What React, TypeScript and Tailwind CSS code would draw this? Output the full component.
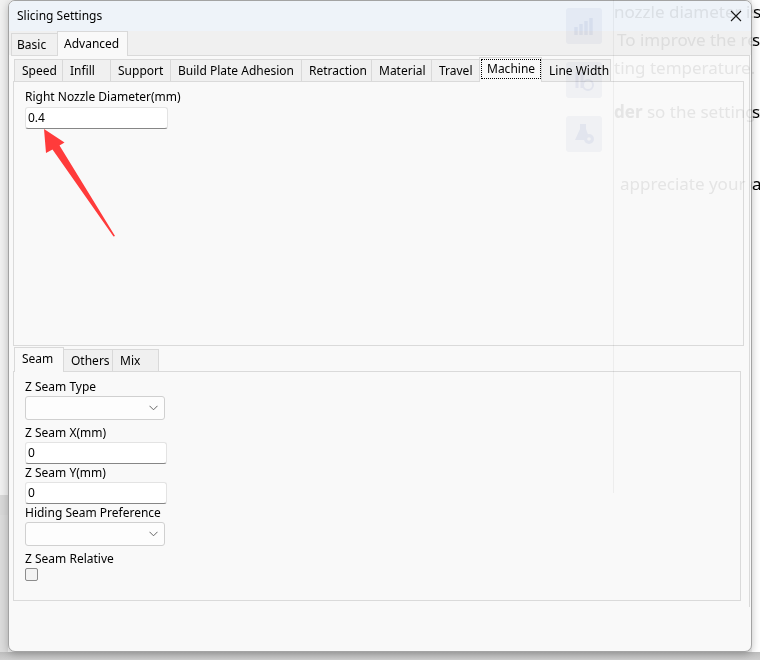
import React from 'react';

const innerTabs: [string, number][] = [
  ['Speed', 49],
  ['Infill', 48],
  ['Support', 60],
  ['Build Plate Adhesion', 131],
  ['Retraction', 70],
  ['Material', 60],
  ['Travel', 48],
  ['Machine', 63],
  ['Line Width', 69],
];

function Tab({ label, width, selected, focus, first }: { label: string; width: number; selected?: boolean; focus?: boolean; first?: boolean }) {
  if (selected) {
    return (
      <div
        style={{ width }}
        className={`relative z-10 -mb-px flex h-[25px] shrink-0 items-start border-x border-t border-[#d9d9d9] bg-[#f9f9f9] pl-[2px] pt-[2px] ${first ? '' : '-ml-px'}`}
      >
        <span className={`px-[5px] leading-[18px] ${focus ? 'outline outline-1 outline-dotted outline-black' : ''}`}>{label}</span>
      </div>
    );
  }
  return (
    <div
      style={{ width }}
      className={`flex h-[22px] shrink-0 items-center border-t border-r border-[#d9d9d9] bg-[#f0f0f0] pl-[7px] ${first ? 'border-l' : ''}`}
    >
      <span className="leading-[18px]">{label}</span>
    </div>
  );
}

function Chevron() {
  return (
    <svg width="9" height="6" viewBox="0 0 9 6" className="mr-[6px]">
      <path d="M0.5 0.8 L4.5 4.8 L8.5 0.8" fill="none" stroke="#555" strokeWidth="0.9" />
    </svg>
  );
}

function Combo({ mt }: { mt: string }) {
  return (
    <div className={`flex h-[24px] w-[140px] items-center justify-end rounded-[3px] border border-[#d0d0d0] bg-[#fdfdfd] ${mt}`}>
      <Chevron />
    </div>
  );
}

function Input({ value, w, h, mt }: { value: string; w: string; h: string; mt: string }) {
  return (
    <div className={`flex items-center rounded-[3px] border border-[#e3e3e3] border-b-[#868686] bg-white pl-[2px] ${w} ${h} ${mt}`}>
      <span className="leading-[16px]">{value}</span>
    </div>
  );
}

function Label({ text, mt }: { text: string; mt: string }) {
  return <div className={`h-[16px] leading-[16px] ${mt}`}>{text}</div>;
}

export default function App() {
  return (
    <div className="relative h-[660px] w-[760px] overflow-hidden bg-[#f2f2f2] font-['Noto_Sans','Liberation_Sans',sans-serif] text-[12px] text-black">
      <div className="flex h-[652px]">
        {/* left background strip */}
        <div className="flex w-[8px] shrink-0 flex-col">
          <div className="h-[495px] bg-[#f1f1f1]" />
          <div className="h-[20px] bg-[#d9d9d9]" />
          <div className="flex-1 bg-[#dcdcdc]" />
        </div>

        {/* dialog */}
        <div className="relative z-10 flex h-[652px] w-[744px] shrink-0 flex-col overflow-hidden rounded-[7px] border border-[#a3a3a3] bg-[#f9f9f9] shadow-[0_2px_8px_rgba(0,0,0,0.25)]">
          {/* title bar */}
          <div className="flex h-[30px] shrink-0 items-center justify-between bg-[#eef3f9] pl-[8px] pr-[8px]">
            <span className="leading-[16px]">Slicing Settings</span>
            <svg width="12" height="12" viewBox="0 0 12 12" className="mr-[1px]">
              <path d="M1 1 L11 11 M11 1 L1 11" stroke="#1a1a1a" strokeWidth="1.1" />
            </svg>
          </div>

          {/* outer tab bar */}
          <div className="flex h-[24px] shrink-0 items-end bg-[#f0f0f0] pl-[2px]">
            <div className="flex h-[22px] w-[46px] items-center border-l border-t border-[#d9d9d9] bg-[#f0f0f0] pl-[5px]">
              <span className="leading-[18px]">Basic</span>
            </div>
            <div className="relative z-10 -mb-px flex h-[25px] w-[71px] items-center border-x border-t border-[#d9d9d9] bg-[#f9f9f9] pl-[6px]">
              <span className="leading-[18px]">Advanced</span>
            </div>
          </div>

          {/* outer pane */}
          <div className="ml-[2px] flex h-[552px] w-[739px] flex-col border-t border-r border-[#dadada] pl-[2px]">
            {/* inner tab bar */}
            <div className="flex h-[25px] shrink-0 items-end pl-[1px]">
              {innerTabs.map(([label, w], i) =>
                label === 'Machine' ? (
                  <Tab key={label} label={label} width={w} selected focus />
                ) : (
                  <Tab key={label} label={label} width={w} first={i === 0} />
                )
              )}
            </div>
            {/* inner pane */}
            <div className="flex h-[265px] w-[731px] shrink-0 flex-col border border-[#dadada] bg-[#f9f9f9] pl-[11px] pt-[7px]">
              <Label text="Right Nozzle Diameter(mm)" mt="mt-0" />
              <Input value="0.4" w="w-[143px]" h="h-[22px]" mt="mt-[2px]" />
            </div>

            {/* lower tab bar */}
            <div className="flex h-[25px] shrink-0 items-end pl-[1px]">
              <Tab label="Seam" width={50} selected first />
              <Tab label="Others" width={49} />
              <Tab label="Mix" width={46} />
            </div>
            {/* lower pane */}
            <div className="flex h-[230px] w-[728px] shrink-0 flex-col border border-[#dadada] bg-[#f9f9f9] pl-[11px] pt-[7px]">
              <Label text="Z Seam Type" mt="mt-0" />
              <Combo mt="mt-[1px]" />
              <Label text="Z Seam X(mm)" mt="mt-[5px]" />
              <Input value="0" w="w-[142px]" h="h-[22px]" mt="mt-[1px]" />
              <Label text="Z Seam Y(mm)" mt="mt-[1px]" />
              <Input value="0" w="w-[142px]" h="h-[22px]" mt="mt-[1px]" />
              <Label text="Hiding Seam Preference" mt="mt-[1px]" />
              <Combo mt="mt-[1px]" />
              <Label text="Z Seam Relative" mt="mt-[5px]" />
              <div className="mt-[1px] h-[13px] w-[13px] rounded-[2px] border border-[#8c8c8c] bg-[#f3f3f3]" />
            </div>
          </div>
        </div>

        {/* right background strip */}
        <div className="flex w-[8px] shrink-0 flex-col overflow-hidden bg-white text-[17px] leading-[28px] whitespace-nowrap">
          <div className="-mt-[2px] pl-[1px]">s</div>
          <div className="pl-0">su</div>
          <div className="h-[28px]" />
          <div className="pt-[16px] pl-0">s</div>
          <div className="pt-[44px] pl-0">a</div>
        </div>
      </div>
      {/* bottom background strip */}
      <div className="h-[8px] bg-gradient-to-b from-[#bdbdbd] to-[#cfcfcf]" />

      {/* ghost translucent window showing through */}
      <div className="pointer-events-none absolute left-[566px] top-[8px] z-20 flex flex-col gap-[18px] mix-blend-multiply">
        <div className="flex h-[36px] w-[36px] items-center justify-center rounded-[3px] bg-[#f5f6fa]">
          <svg width="22" height="22" viewBox="0 0 22 22">
            <path d="M3 20 V12 M8 20 V9 M13 20 V6 M18 20 V3" stroke="#e6e9f3" strokeWidth="3.5" />
          </svg>
        </div>
        <div className="flex h-[36px] w-[36px] items-center justify-center rounded-[3px] bg-[#f6f7fa]">
          <svg width="22" height="22" viewBox="0 0 22 22">
            <path d="M4 3 V19 M9 3 V19" stroke="#e8eaf3" strokeWidth="3" />
            <circle cx="15" cy="16" r="5" fill="none" stroke="#e8eaf3" strokeWidth="2" />
          </svg>
        </div>
        <div className="flex h-[36px] w-[36px] items-center justify-center rounded-[3px] bg-[#f6f7fa]">
          <svg width="24" height="24" viewBox="0 0 24 24">
            <path d="M8 2 H14 V7 L18 18 H3 L8 7 Z" fill="#e8ebf4" />
            <circle cx="17" cy="17" r="5" fill="#e8ebf4" />
            <circle cx="17" cy="17" r="1.8" fill="#f6f7fa" />
          </svg>
        </div>
      </div>
      <div className="pointer-events-none absolute left-[613px] top-0 z-20 h-[493px] w-[139px] border-l border-[#f3f3f3] text-[17px] leading-[28px] text-[#ebebeb] whitespace-nowrap mix-blend-multiply">
        <div className="-mt-[2px]">nozzle diameter is</div>
        <div className="pl-[3px]">To improve the re</div>
        <div>ting temperature.</div>
        <div className="pt-[16px]"><span className="font-bold">der</span> so the settings</div>
        <div className="pl-[6px] pt-[44px]">appreciate your c</div>
      </div>

      {/* red annotation arrow */}
      <svg className="pointer-events-none absolute left-0 top-0 z-30" width="760" height="660" viewBox="0 0 760 660">
        <polygon points="44,129 64.5,142.5 59.5,145.5 115,236 113.5,236.5 52.5,149.5 46,153" fill="#ff3b3b" />
      </svg>
    </div>
  );
}
